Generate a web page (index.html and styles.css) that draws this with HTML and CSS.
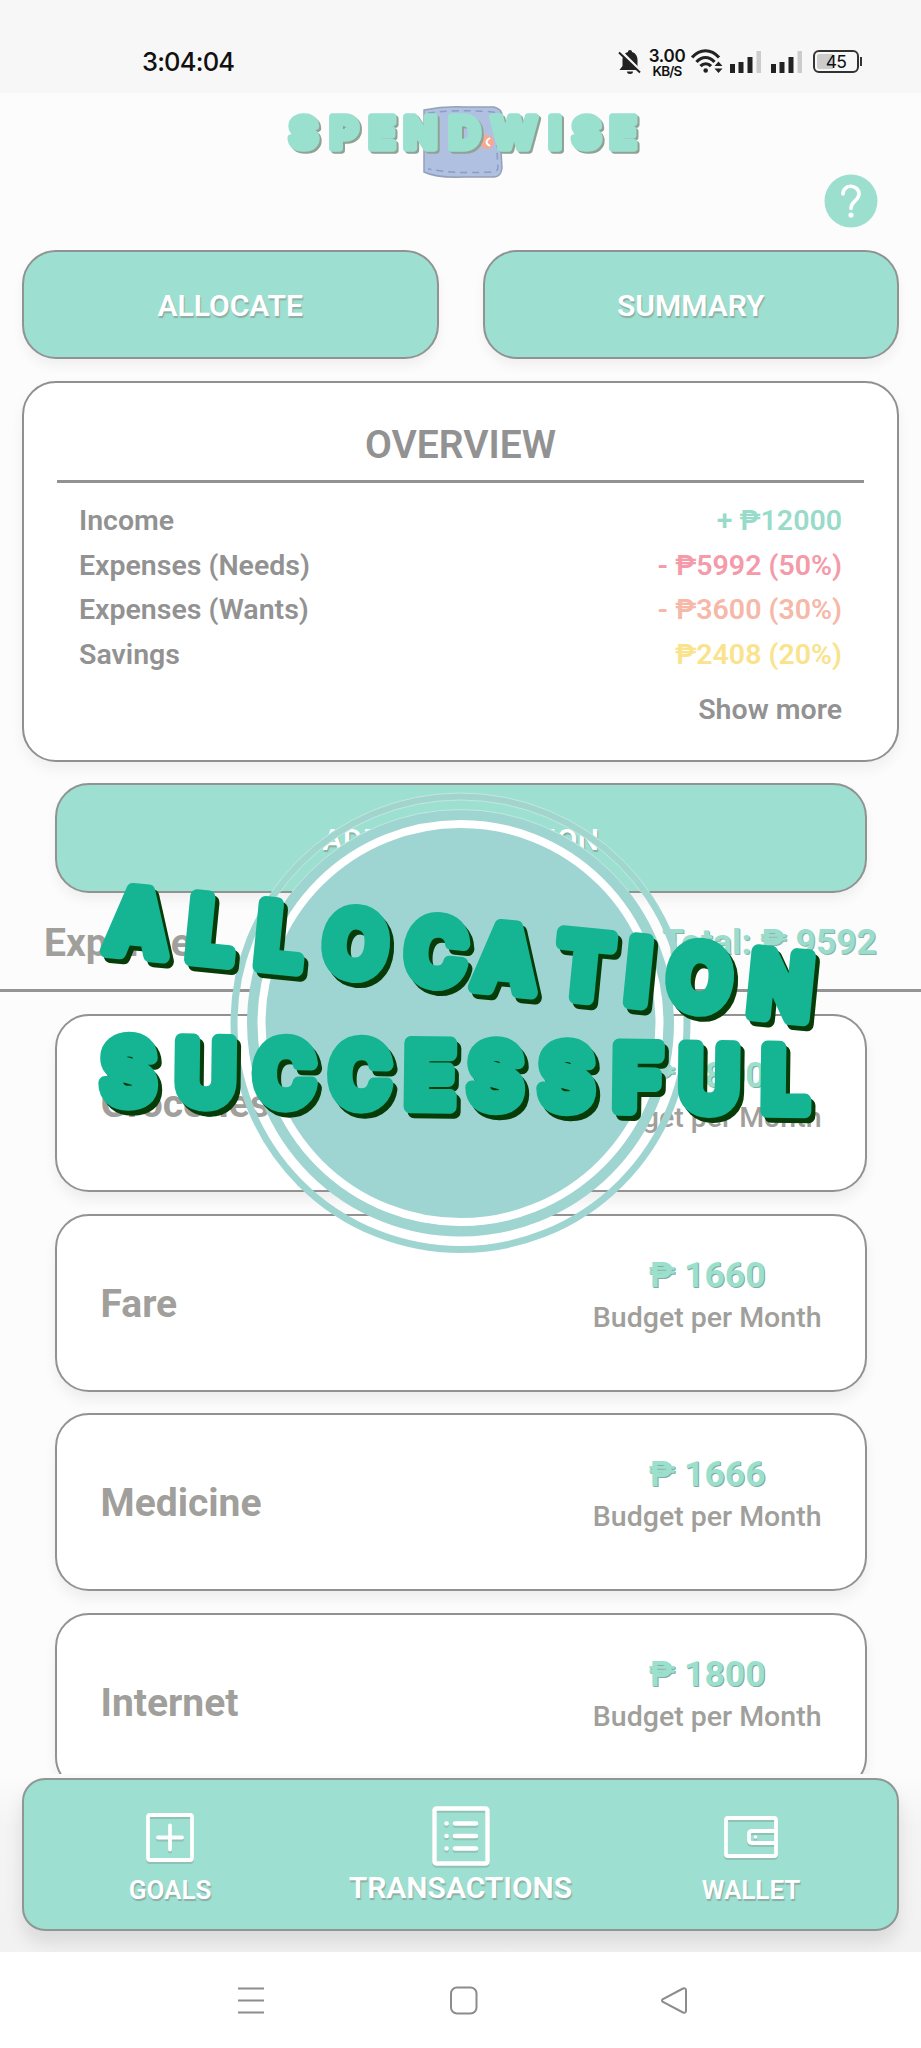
FILE: index.html
```html
<!DOCTYPE html>
<html lang="en">
<head>
<meta charset="utf-8">
<title>Spendwise</title>
<link rel="stylesheet" href="styles.css">
</head>
<body>
<div class="phone">
  <header class="status">
    <span class="clock">3:04:04</span>
    <div class="indicators">
      <svg class="bell" width="24" height="26" viewBox="0 0 24 26"><path d="M12 1c1.300 0 2 .8 2 2 3.500 1 5.500 4 5.500 8v6l3 4H1.500l3-4v-6c0-4 2-7 5.500-8 0-1.200.7-2 2-2z" fill="#222"/><path d="M9 22.500h6a3 2.500 0 0 1-6 0z" fill="#222"/><path d="M2.500 2l20 20" stroke="#f7f7f7" stroke-width="3"/><path d="M1 3.500l21 20" stroke="#222" stroke-width="2"/></svg>
      <span class="speed"><b>3.00</b><i>KB/S</i></span>
      <svg class="wifi" width="32" height="26" viewBox="0 0 32 26" fill="none" stroke="#222" stroke-width="3.200"><path d="M1 9.500c8-9 19-9 27 0M5.500 14c5.500-6 12.500-6 18 0M9.500 18.200c3-3.300 7.500-3.300 10.500 0"/><circle cx="14.700" cy="22.500" r="2.300" fill="#222" stroke="none"/><path d="M27.500 13.500l4 4.500h-8zM27.500 25l4-4.500h-8z" fill="#222" stroke="none"/></svg>
      <svg class="signal" width="31" height="24" viewBox="0 0 31 24"><path d="M0 15h5v9H0zM8.500 13h5v11h-5zM17.500 8h5v16h-5z" fill="#222"/><path d="M26.500 2h4.500v22h-4.500z" fill="#ccc"/></svg>
      <svg class="signal second" width="31" height="24" viewBox="0 0 31 24"><path d="M0 15h5v9H0zM8.500 13h5v11h-5zM17.500 8h5v16h-5z" fill="#222"/><path d="M26.500 2h4.500v22h-4.500z" fill="#ccc"/></svg>
      <div class="battery"><span>45</span></div>
    </div>
  </header>

  <main class="content">
    <div class="brand">
      <svg class="logo" width="400" height="90" viewBox="260 100 400 90">
        <path d="M424 110q20-4 40-3h30q8 2 8 9-2 25 0 52-1 9-8 9h-30q-28 1-40-5z" fill="#afc0e0" stroke="#979fb6" stroke-width="1.500"/>
        <path d="M428 113q30-4 65-1 5 1 5 6-2 26 0 49 0 5-6 5-38 2-64-3" fill="none" stroke="#8c9cc5" stroke-width="1.500" stroke-dasharray="7 5"/>
        <circle cx="487" cy="142" r="7" fill="#f7a891"/><path d="M490 138q-7 4 0 8" fill="none" stroke="#fff" stroke-width="2"/>
        <text class="logo-text" y="148" x="303.500 344 382 420.500 464.500 514 555 586.500 623">SPENDWISE</text>
      </svg>
      <svg class="help" width="54" height="54" viewBox="0 0 54 54"><circle cx="27" cy="27" r="26.500" fill="#9ddfcf"/><path d="M19 20c0-10.500 16-10 16 0 0 6.500-8 7-8 14.500" fill="none" stroke="#fff" stroke-width="3.600" stroke-linecap="round"/><circle cx="27" cy="41" r="2.600" fill="#fff"/></svg>
    </div>

    <div class="actions">
      <div class="button">ALLOCATE</div>
      <div class="button">SUMMARY</div>
    </div>

    <section class="overview">
      <h1>OVERVIEW</h1>
      <div class="row"><span>Income</span><span class="income">+ ₱12000</span></div>
      <div class="row"><span>Expenses (Needs)</span><span class="needs">- ₱5992 (50%)</span></div>
      <div class="row"><span>Expenses (Wants)</span><span class="wants">- ₱3600 (30%)</span></div>
      <div class="row"><span>Savings</span><span class="savings">₱2408 (20%)</span></div>
      <div class="more">Show more</div>
    </section>

    <div class="button add">ADD TRANSACTION</div>

    <div class="expenses-head"><h2>Expenses</h2><span class="total">Total: ₱ 9592</span></div>

    <div class="expenses">
      <article class="card"><h3>Groceries</h3><div class="budget"><b>₱ 1800</b><span>Budget per Month</span></div></article>
      <article class="card"><h3>Fare</h3><div class="budget"><b>₱ 1660</b><span>Budget per Month</span></div></article>
      <article class="card"><h3>Medicine</h3><div class="budget"><b>₱ 1666</b><span>Budget per Month</span></div></article>
      <article class="card"><h3>Internet</h3><div class="budget"><b>₱ 1800</b><span>Budget per Month</span></div></article>
    </div>
  </main>

  <footer class="dock">
    <nav class="tabs">
      <div class="tab">
        <svg width="48" height="49" viewBox="0 0 48 49" fill="none" stroke="#fff" stroke-width="3.800" stroke-linecap="round"><rect x="2" y="2" width="44" height="45" rx="2"/><path d="M12 24.500h24M24 12.500v24"/></svg>
        <span>GOALS</span>
      </div>
      <div class="tab current">
        <svg width="58" height="60" viewBox="0 0 58 60" fill="none" stroke="#fff" stroke-width="4.500" stroke-linecap="round"><rect x="2.500" y="2.500" width="53" height="55" rx="2"/><path d="M23 17.500h21M23 30h21M23 42.500h21M14.500 17.500h.1M14.500 30h.1M14.500 42.500h.1"/></svg>
        <span>TRANSACTIONS</span>
      </div>
      <div class="tab">
        <svg width="54" height="42" viewBox="0 0 54 42" fill="none" stroke="#fff" stroke-width="3.800"><rect x="2" y="2" width="50" height="38" rx="2"/><path d="M52 15H28q-3 0-3 3v6q0 3 3 3h24"/><circle cx="31.500" cy="21" r="1.800" fill="#fff" stroke="none"/></svg>
        <span>WALLET</span>
      </div>
    </nav>
  </footer>

  <div class="system-nav">
    <svg width="921" height="96" viewBox="0 0 921 96" fill="none" stroke="#8c8c8c" stroke-width="2"><path d="M238 36.500h26M238 48.500h26M238 60.500h26"/><rect x="451" y="35.500" width="25.500" height="26" rx="6"/><path d="M683 36.500l-20 10.500q-2 1.500 0 3l20 10.500q3 1 3-2v-20q0-3-3-2z"/></svg>
  </div>

  <svg class="toast" width="921" height="500" viewBox="0 780 921 500">
    <defs>
      <linearGradient id="ring" x1="0" y1="793" x2="0" y2="960" gradientUnits="userSpaceOnUse"><stop offset="0" stop-color="#a3d3cd"/><stop offset=".5" stop-color="#9fd8cf"/><stop offset="1" stop-color="#9fd5d1"/></linearGradient>
      <linearGradient id="rim" x1="0" y1="793" x2="0" y2="893" gradientUnits="userSpaceOnUse"><stop offset="0" stop-color="#bfe9df"/><stop offset=".98" stop-color="#bfe9df"/><stop offset="1" stop-color="#bfe9df" stop-opacity="0"/></linearGradient>
    </defs>
    <circle cx="460.500" cy="1023" r="226.500" class="ring-outer"/>
    <circle cx="460.500" cy="1023" r="208" class="ring-inner"/>
    <circle cx="460.500" cy="1023" r="230" class="rim"/>
    <circle cx="460.500" cy="1023" r="223" class="rim"/>
    <circle cx="460.500" cy="1023" r="213.500" class="rim"/>
    <circle cx="460.500" cy="1023" r="199" class="disc"/>
    <g class="toast-text">
      <text transform="rotate(5.600 460 955) scale(.94 1)" y="985.500" x="145 223.400 296.800 377.700 463.800 538.300 622.300 680 745.500 831.900">ALLOCATION</text>
      <text transform="rotate(.7 460 1075) scale(.94 1)" y="1107" x="136.700 218.600 302.700 383 457.400 527.100 602.700 678.200 754.300 835.100">SUCCESSFUL</text>
    </g>
  </svg>
</div>
</body>
</html>
```
FILE: styles.css
```css
* { box-sizing: border-box; }
body { margin: 0; background: #fcfcfc; font-family: Roboto, "Liberation Sans", sans-serif; }
h1, h2, h3 { margin: 0; }

.phone { position: relative; width: 921px; height: 2048px; display: flex; flex-direction: column; overflow: hidden; }

.status { height: 93px; flex: none; background: #f7f7f7; display: flex; justify-content: space-between; padding: 0 62px 0 142px; color: #111; }
.clock { font: 500 25.500px/32px Inter, sans-serif; letter-spacing: -.8px; margin-top: 46px; }
.indicators { display: flex; align-items: flex-start; padding-top: 48px; }
.bell { margin: 1px 6px 0 0; }
.speed { width: 38px; display: flex; flex-direction: column; align-items: center; font-family: Inter, sans-serif; }
.speed b { font-size: 17px; font-weight: 600; line-height: 17px; letter-spacing: -.3px; }
.speed i { font-style: normal; font-size: 13.500px; font-weight: 600; line-height: 13px; letter-spacing: -.8px; }
.wifi { margin-left: 5px; }
.signal { margin: 1px 0 0 7px; }
.second { margin-left: 10px; }
.battery { position: relative; width: 46px; height: 23px; margin: 2px 0 0 11px; border: 2px solid #333; border-radius: 6px; background: linear-gradient(90deg, #ccc 42%, transparent 42%); background-clip: content-box; padding: 2px; font: 400 17.500px/15px Inter, sans-serif; letter-spacing: -.8px; text-align: center; }
.battery::after { content: ""; position: absolute; right: -5px; top: 5px; width: 2px; height: 9px; background: #333; }

.content { height: 1681px; flex: none; overflow: hidden; display: flex; flex-direction: column; }
.brand { height: 157px; flex: none; display: flex; justify-content: space-between; padding: 7px 43px 0 260px; }
.logo-text { font: 700 43px Inter, sans-serif; text-anchor: middle; fill: #9ae0cf; stroke: #9ae0cf; stroke-width: 7.500px; stroke-linejoin: round; filter: drop-shadow(2px 2px 0 #8fa296); }
.help { margin-top: 74px; }

.actions { display: flex; gap: 44px; padding: 0 22px; flex: none; }
.button { flex: 1; height: 109px; display: flex; align-items: center; justify-content: center; border: 2px solid #909392; border-radius: 34px; background: #9ddfd1; color: #fff; padding-top: 2px; font-size: 30px; font-weight: 600; text-shadow: 1px 2px 1px #8baea5; box-shadow: 0 7px 12px #0000000d; }

.overview { flex: none; height: 381px; margin: 22px 22px 0; padding: 0 55px; background: #fff; border: 2px solid #909090; border-radius: 34px; box-shadow: 0 7px 14px #0000000d; color: #929292; font-size: 28.500px; font-weight: 600; }
.overview h1 { height: 100px; margin: 0 -22px 16px; padding-top: 38px; border-bottom: 3px solid #929292; text-align: center; font-size: 39px; line-height: 48px; font-weight: 600; }
.row { display: flex; justify-content: space-between; line-height: 44.600px; }
.more { text-align: right; line-height: 44px; margin-top: 11px; }
.income { color: #98dbc9; }
.needs { color: #f49aa9; }
.wants { color: #f6b8a8; }
.savings { color: #f9e38c; }

.add { flex: none; margin: 21px 54px 0 55px; height: 110px; letter-spacing: .4px; }
.expenses-head { flex: none; height: 99px; display: flex; justify-content: space-between; padding: 22px 44px 0 44px; border-bottom: 3px solid #949494; line-height: 56px; }
.expenses-head h2 { font-size: 39px; font-weight: 700; color: #a09f9b; }
.total { font-size: 35.500px; font-weight: 700; color: #9bdccc; text-shadow: 1px 1px 0 #89b5a9; margin-top: -1px; }

.expenses { display: flex; flex-direction: column; gap: 21.500px; padding: 22px 54px 0 55px; }
.card { flex: none; height: 178px; display: flex; justify-content: space-between; padding: 0 43.500px; background: #fff; border: 2px solid #929292; border-radius: 34px; box-shadow: 0 8px 13px #0000000f; color: #a09f9b; }
.card h3 { font-size: 39px; font-weight: 700; line-height: 50px; margin-top: 63px; }
.budget { display: flex; flex-direction: column; align-items: center; padding-top: 36px; font-size: 28.500px; font-weight: 500; line-height: 40px; }
.budget b { font-size: 35.500px; line-height: 46px; font-weight: 700; color: #9bdfcd; text-shadow: 1px 1px 0 #83aba0; }

.dock { flex: none; height: 178px; padding: 4px 22px 21px; background: linear-gradient(#fcfcfc, #f4f4f4 30%, #f2f2f2); }
.tabs { height: 153px; border: 2px solid #8f9794; border-radius: 23px; background: #9ddfd1; color: #fff; display: flex; justify-content: space-between; box-shadow: 0 12px 18px #0000001a; padding: 0 15px; font-weight: 600; font-size: 26px; text-shadow: 1px 2px 1px #8baea5; }
.tab { width: 262px; display: flex; flex-direction: column; align-items: center; justify-content: space-between; padding: 33px 0 23px; line-height: 32px; }
.tab svg { filter: drop-shadow(0 2px 0 #8fc1b4); }
.tab:last-child svg { margin-top: 3px; }
.current { padding: 26px 0 25px; font-size: 30px; }
.system-nav { height: 96px; flex: none; background: #fff; }

.toast { position: absolute; left: 0; top: 780px; }
.ring-outer { fill: none; stroke: url(#ring); stroke-width: 7px; }
.ring-inner { fill: none; stroke: #9fd5d1; stroke-width: 11px; }
.rim { fill: none; stroke: url(#rim); stroke-width: 1px; }
.disc { fill: #9ed5d2; stroke: #fff; stroke-width: 8px; }
.toast-text { font: 700 87px Inter, sans-serif; text-anchor: middle; fill: #15b493; stroke: #15b493; stroke-width: 14px; stroke-linejoin: round; filter: drop-shadow(4px 5px 0 #073c08); }
```
